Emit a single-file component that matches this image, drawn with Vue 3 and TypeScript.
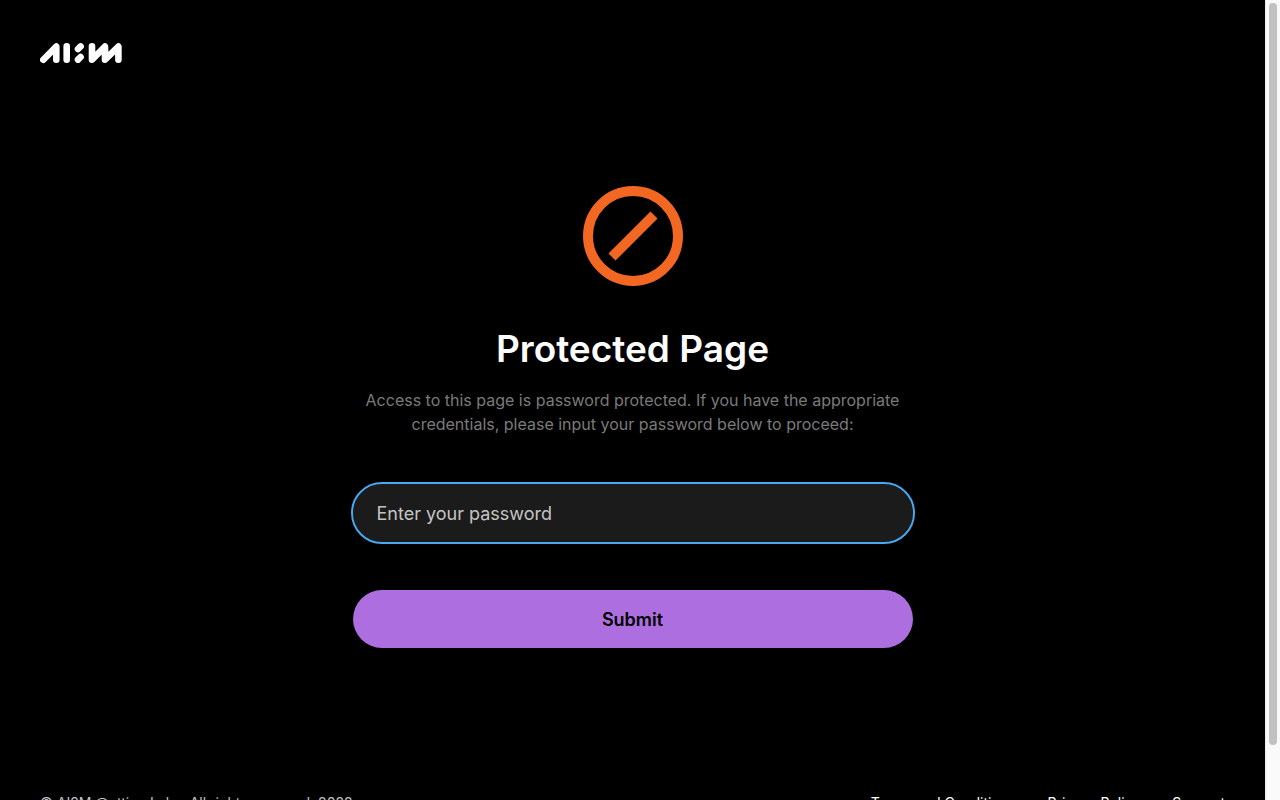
<script setup lang="ts">
import { ref } from 'vue'

const password = ref<string>('')
const links: string[] = ['Terms and Conditions', 'Privacy Policy', 'Support']
</script>

<template>
  <div class="viewport">
    <div class="page">
      <header class="header">
        <a class="brand" href="#" aria-label="AI2M home">
          <svg width="82" height="22" viewBox="0 0 82 22" fill="none" stroke="#fff" stroke-width="6.6" stroke-linecap="round" stroke-linejoin="round" aria-hidden="true">
            <path d="M3.3 17.7 16.3 4.6V17.7M26.7 4.3V17.7M38 7l2.6-2.6M38 17.6l2.6-2.6M52 4.3V17.7L65 4.6V17.7L78.4 4.6V17.7" />
          </svg>
        </a>
      </header>

      <main class="main">
        <form class="form" @submit.prevent>
          <svg class="icon" width="100" height="100" viewBox="0 0 100 100" fill="none" stroke="#f26722" stroke-width="10" aria-hidden="true">
            <circle cx="50" cy="50" r="45" />
            <path d="M29 71 71 29" />
          </svg>
          <h1 class="title">Protected Page</h1>
          <p class="text">Access to this page is password protected. If you have the appropriate credentials, please input your password below to proceed:</p>
          <input v-model="password" class="field" type="password" placeholder="Enter your password" aria-label="Password" />
          <button class="submit" type="submit">Submit</button>
        </form>
      </main>

      <footer class="footer">
        <span class="copyright">© AI2M @etting Labs. All rights reserved. 2022</span>
        <nav class="links">
          <a v-for="link in links" :key="link" href="#">{{ link }}</a>
        </nav>
      </footer>
    </div>
    <div class="scrollbar" aria-hidden="true">
      <div class="thumb"></div>
    </div>
  </div>
</template>

<style>
body {
  background: #000;
}
</style>

<style scoped>
.viewport {
  display: flex;
  height: 100vh;
}
.page {
  flex: 1;
  min-width: 0;
  overflow-y: auto;
  background: #000;
  color: #fff;
  font-family: Inter, sans-serif;
}
.scrollbar {
  box-sizing: border-box;
  flex: none;
  width: 15px;
  padding: 3px;
  border-left: 1px solid #ececec;
  background: #fafafa;
}
.thumb {
  width: 8px;
  height: 93.5%;
  border-radius: 4px;
  background: #c1c1c1;
}
.header {
  padding: 42px 40px;
}
.brand,
.brand svg {
  display: block;
  width: 82px;
}
.main {
  padding: 80px 24px 0;
}
.form {
  display: flex;
  flex-direction: column;
  align-items: center;
  max-width: 560px;
  margin: 0 auto;
}
.title {
  margin: 40px 0 0;
  font-size: 37px;
  line-height: 46px;
  font-weight: 600;
}
.text {
  margin: 16px 0 0;
  color: #7a7a7a;
  font-size: 16px;
  line-height: 24px;
  text-align: center;
}
.field {
  box-sizing: border-box;
  width: 100%;
  height: 58px;
  margin: 48px 0 0;
  padding: 0 24px;
  border: 0;
  border-radius: 29px;
  outline: 2px solid #4aa8ef;
  background: #1b1b1b;
  color: #fff;
  font: 400 18px/24px Inter, sans-serif;
}
.field::placeholder {
  color: #c4c4c4;
}
.submit {
  width: 100%;
  height: 58px;
  margin: 48px 0 0;
  padding: 2px 24px 0;
  border: 0;
  border-radius: 29px;
  background: #ad6fe0;
  color: #000;
  font: 600 18px/24px Inter, sans-serif;
}
.footer {
  display: flex;
  justify-content: space-between;
  padding: 144px 40px 44px;
  font-size: 14px;
  line-height: 22px;
}
.copyright {
  color: #c4c4c4;
}
.links {
  display: flex;
  gap: 32px;
}
.links a {
  color: #fff;
  text-decoration: none;
}
</style>
